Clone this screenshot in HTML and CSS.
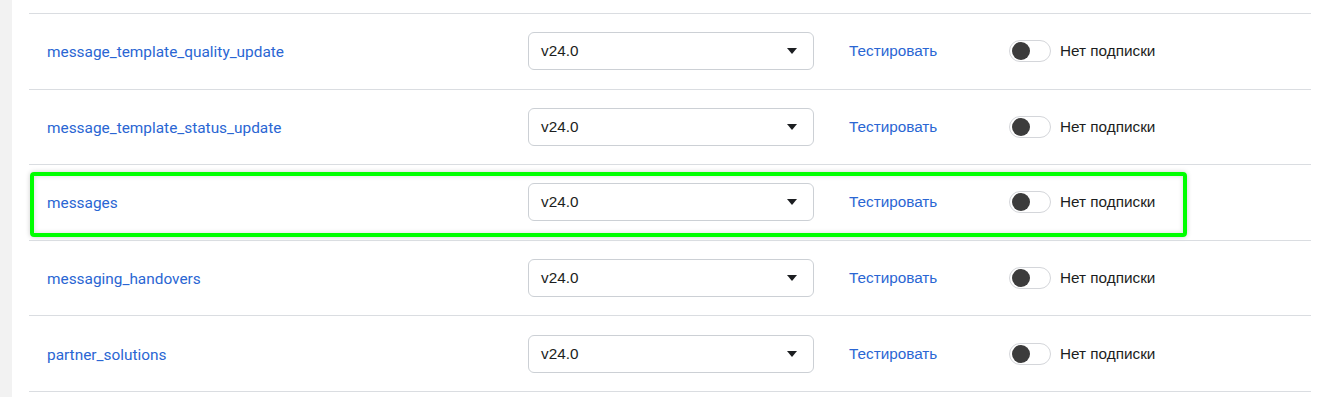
FILE: index.html
```html
<!DOCTYPE html>
<html lang="en">
<head>
    <meta charset="UTF-8">
    <title>Webhooks</title>
    <link rel="stylesheet" href="styles.css">
</head>
<body>
    <div class="page">
        <div class="fields">
            <div class="field-row">
                <a class="field-name" href="#">message_template_quality_update</a>
                <div class="version-select"><span>v24.0</span><span class="caret"></span></div>
                <a class="test-link" href="#">Тестировать</a>
                <div class="toggle"><span class="knob"></span></div>
                <span class="status">Нет подписки</span>
            </div>
            <div class="field-row">
                <a class="field-name" href="#">message_template_status_update</a>
                <div class="version-select"><span>v24.0</span><span class="caret"></span></div>
                <a class="test-link" href="#">Тестировать</a>
                <div class="toggle"><span class="knob"></span></div>
                <span class="status">Нет подписки</span>
            </div>
            <div class="field-row highlighted">
                <a class="field-name" href="#">messages</a>
                <div class="version-select"><span>v24.0</span><span class="caret"></span></div>
                <a class="test-link" href="#">Тестировать</a>
                <div class="toggle"><span class="knob"></span></div>
                <span class="status">Нет подписки</span>
                <div class="highlight-box"></div>
            </div>
            <div class="field-row">
                <a class="field-name" href="#">messaging_handovers</a>
                <div class="version-select"><span>v24.0</span><span class="caret"></span></div>
                <a class="test-link" href="#">Тестировать</a>
                <div class="toggle"><span class="knob"></span></div>
                <span class="status">Нет подписки</span>
            </div>
            <div class="field-row">
                <a class="field-name" href="#">partner_solutions</a>
                <div class="version-select"><span>v24.0</span><span class="caret"></span></div>
                <a class="test-link" href="#">Тестировать</a>
                <div class="toggle"><span class="knob"></span></div>
                <span class="status">Нет подписки</span>
            </div>
        </div>
    </div>
</body>
</html>
```

FILE: styles.css
```css
body {
    margin: 0;
    padding: 0;
    background: #ffffff;
    font-family: 'Liberation Sans', Arial, sans-serif;
    font-size: 15.3px;
    color: #1c1e21;
    overflow: hidden;
}

.page {
    border-left: 12px solid #f2f2f2;
    padding: 13px 17px 0 17px;
    height: 397px;
    box-sizing: border-box;
}

.fields {
    border-bottom: 1px solid #dadde1;
}

.field-row {
    position: relative;
    display: grid;
    grid-template-columns: 481px 286px 195px 42px auto;
    align-items: center;
    height: 74.6px;
    padding-left: 18px;
    border-top: 1px solid #dadde1;
}

.field-row .test-link {
    margin-left: 35px;
}

.field-name {
    font-family: Roboto, sans-serif;
    font-size: 15.4px;
    color: #2a66d3;
    text-decoration: none;
    padding-top: 2px;
}

.version-select {
    display: flex;
    justify-content: space-between;
    align-items: center;
    height: 38px;
    box-sizing: border-box;
    padding: 0 16px 0 12px;
    border: 1px solid #ccd0d5;
    border-radius: 6px;
    color: #1c1e21;
}

.caret {
    width: 0;
    height: 0;
    border-left: 5.5px solid transparent;
    border-right: 5.5px solid transparent;
    border-top: 6px solid #1c1e21;
}

.test-link {
    color: #2a66d3;
    text-decoration: none;
}

.toggle {
    width: 42px;
    height: 22px;
    box-sizing: border-box;
    border: 1px solid #d4d6da;
    border-radius: 11px;
    background: #ffffff;
    display: flex;
    align-items: center;
    padding-left: 2px;
}

.knob {
    width: 18px;
    height: 18px;
    border-radius: 50%;
    background: #3c3c3c;
}

.status {
    margin-left: 9px;
}

.highlight-box {
    position: absolute;
    left: 1px;
    top: 7px;
    width: 1157px;
    height: 65px;
    box-sizing: border-box;
    border: 4px solid #00ff00;
    border-radius: 4px;
    box-shadow: 0 0 5px rgba(0, 0, 0, 0.2), inset 0 0 5px rgba(0, 0, 0, 0.15);
    pointer-events: none;
}
```
